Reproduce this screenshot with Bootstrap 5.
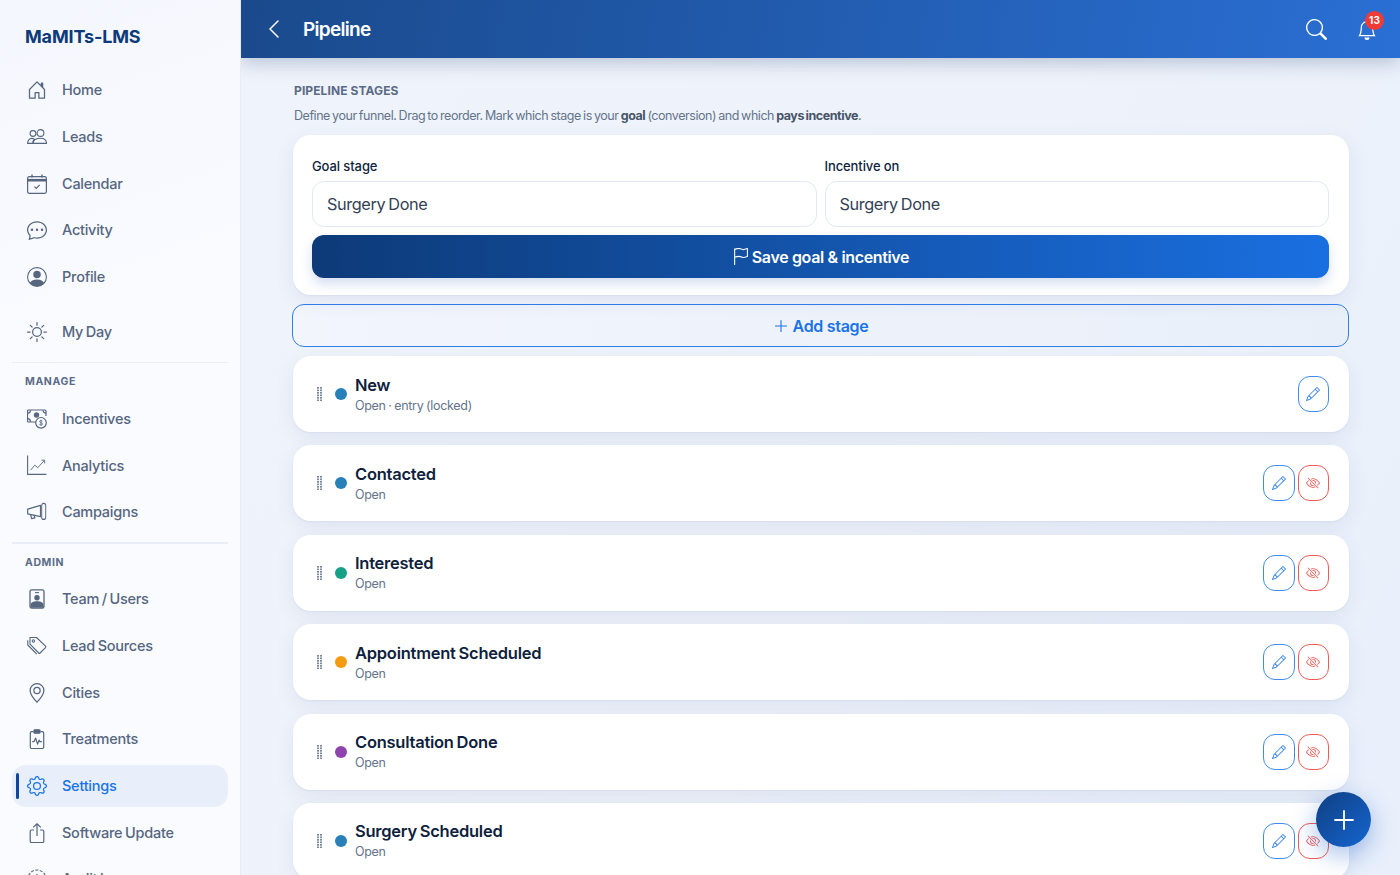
<!DOCTYPE html>
<html>
<head>
  <meta charset="utf-8">
  <meta name="viewport" content="width=device-width, initial-scale=1">
  <title>Pipeline</title>
  <link href="https://cdn.jsdelivr.net/npm/bootstrap@5.3.3/dist/css/bootstrap.min.css" rel="stylesheet">
  <script src="https://cdn.jsdelivr.net/npm/bootstrap@5.3.3/dist/js/bootstrap.bundle.min.js"></script>
  <style>
    html, body { height: 100%; overflow: hidden; }
    body { font-family: "Inter", "Liberation Sans", sans-serif; background: #eef2fa; color: #0f1f3d; }
    svg { display: block; flex-shrink: 0; }
    .app-shell { height: 875px; }
    .side-panel { width: 241px; flex-shrink: 0; height: 875px; overflow: hidden; padding: 0 12px; border-right: 1px solid #e6ebf5; background: linear-gradient(160deg, #f4f7fd 0%, #f9fbff 40%, #f9fbff 100%); }
    .brand-name { font-size: 18px; font-weight: 700; color: #0d3a78; padding: 25px 0 0 13px; height: 69px; line-height: 23px; letter-spacing: -.15px; }
    .side-link { height: 42.67px; margin-bottom: 4px; padding-left: 15px; gap: 15px; color: #56667f; font-size: 14.5px; font-weight: 500; text-decoration: none; border-radius: 14px; position: relative; letter-spacing: -.25px; word-spacing: -1px; }
    .side-link.is-active { background: #e8effb; color: #1a73e8; }
    .side-link.is-active::before { content: ""; position: absolute; left: 3.5px; top: 8px; bottom: 8px; width: 3px; border-radius: 2px; background: #0d47a1; }
    .side-gap { margin-top: 12px; }
    .side-rule { height: 1.5px; background: #e9edf6; margin-top: 9px; }
    .side-label { font-size: 10.5px; font-weight: 700; letter-spacing: .6px; color: #5b6b86; line-height: 14px; padding: 12px 0 8px 13px; }
    .top-strip { height: 58px; padding: 0 23px 0 27px; background: linear-gradient(100deg, #1a4a8c 0%, #2a6fd4 100%); box-shadow: 0 4px 18px rgba(30, 60, 110, .28); position: relative; z-index: 2; }
    .top-title { font-size: 19px; font-weight: 600; color: #fff; margin-left: 23px; padding-top: 2px; letter-spacing: -.7px; }
    .bell-wrap { position: relative; margin-left: 30px; margin-top: 1px; }
    .bell-count { position: absolute; top: -9px; left: 8px; width: 19px; height: 19px; border-radius: 50%; background: #ef3b36; color: #fff; font-size: 10px; font-weight: 700; line-height: 19px; text-align: center; }
    .main-col { background: linear-gradient(115deg, #eff3fb 0%, #eef2fa 55%, #e9f0fb 100%); overflow: hidden; min-width: 0; }
    .page-body { padding: 25px 51px 0 52px; }
    .page-heading { font-size: 12px; font-weight: 700; letter-spacing: .1px; color: #5b6b86; line-height: 15px; margin: 0 0 9px 1px; }
    .page-note { font-size: 12.5px; color: #64748b; line-height: 17px; margin: 0 0 11px 1px; letter-spacing: -.45px; word-spacing: -.9px; }
    .page-note b { color: #475569; font-weight: 700; }
    .soft-panel { border: 0; border-radius: 18px; background: #fff; box-shadow: 0 6px 20px rgba(40, 70, 130, .08), 0 1px 2px rgba(40, 70, 130, .06); }
    .goal-panel { padding: 23px 20px 17px 19px; margin-bottom: 9px; }
    .field-label { font-size: 13px; font-weight: 500; color: #0f1f3d; line-height: 17px; margin-bottom: 6px; letter-spacing: -.1px; }
    .field-box { height: 46px; border-radius: 12px; border: 1px solid #e2e8f2; font-size: 16.3px; color: #334155; padding: 0 14px; letter-spacing: -.4px; word-spacing: -1px; }
    .save-btn { height: 43px; width: 100%; margin-top: 8px; border: 0; border-radius: 12px; color: #fff; font-size: 16px; font-weight: 600; gap: 3px; letter-spacing: -.35px; background: linear-gradient(90deg, #0d3a78 0%, #1a6fe0 100%); box-shadow: 0 6px 12px rgba(20, 80, 170, .18); }
    .add-btn { height: 43px; width: calc(100% + 1px); margin: 0 0 9px -1px; border: 1px solid #2f7fe8; border-radius: 12px; color: #1a73e8; font-size: 16px; font-weight: 600; gap: 4px; background: linear-gradient(90deg, #f2f5fc, #e9eff9); letter-spacing: -.3px; }
    .add-btn:hover { color: #1a73e8; border-color: #2f7fe8; }
    .stage-row { height: 76px; margin-bottom: 13.4px; padding: 0 20px 0 24px; }
    .grip-mark { width: 5px; margin-right: 13px; }
    .stage-dot { width: 12px; height: 12px; border-radius: 50%; margin-right: 8px; }
    .stage-name { font-size: 16.5px; font-weight: 600; color: #0f1f3d; line-height: 20px; letter-spacing: -.25px; word-spacing: -1px; }
    .stage-sub { font-size: 12.5px; color: #64748b; line-height: 16px; margin-top: 3px; letter-spacing: -.3px; word-spacing: -.6px; }
    .tool-gap { gap: 3px; }
    .tool-btn { width: 31.5px; height: 36px; padding: 0; border-radius: 12px; background: #fff; border: 1px solid; }
    .tool-edit { border-color: #3f8bee; color: #2f7fe8; }
    .tool-hide { border-color: #ef5a55; color: #ef5a55; }
    .fab-add { position: fixed; left: 1316px; top: 792px; width: 55px; height: 55px; border-radius: 50%; border: 0; padding: 0; z-index: 5; background: linear-gradient(135deg, #0f3f82, #1565d0); box-shadow: 0 8px 26px rgba(25, 90, 200, .4); }
  </style>
</head>
<body>
  <div class="app-shell d-flex">
    <aside class="side-panel">
      <div class="brand-name">MaMITs-LMS</div>

      <a href="#" class="side-link d-flex align-items-center">
        <svg width="20" height="20" viewBox="0 0 16 16" fill="currentColor"><path d="M8.354 1.146a.5.5 0 0 0-.708 0l-6 6A.5.5 0 0 0 1.5 7.5v7a.5.5 0 0 0 .5.5h4.5a.5.5 0 0 0 .5-.5v-4h2v4a.5.5 0 0 0 .5.5H14a.5.5 0 0 0 .5-.5v-7a.5.5 0 0 0-.146-.354L13 5.793V2.5a.5.5 0 0 0-.5-.5h-1a.5.5 0 0 0-.5.5v1.293zM2.5 14V7.707l5.5-5.5 5.5 5.500V14H10v-4a.5.5 0 0 0-.5-.5h-3a.5.5 0 0 0-.5.5v4z"/></svg>
        Home
      </a>
      <a href="#" class="side-link d-flex align-items-center">
        <svg width="20" height="20" viewBox="0 0 20 20" fill="none" stroke="currentColor" stroke-width="1.1"><circle cx="6" cy="6.5" r="2.9"/><circle cx="13.5" cy="6" r="3.4"/><path d="M.6 16.4c0-3 1.600-5 4.300-5 1 0 1.800.3 2.400.7-1 1-1.600 2.500-1.600 4.300zM6.200 16.400c0-3.200 3-5.100 7.300-5.100s6 1.900 6 5.100z"/></svg>
        Leads
      </a>
      <a href="#" class="side-link d-flex align-items-center">
        <svg width="20" height="20" viewBox="0 0 20 20" fill="none" stroke="currentColor" stroke-width="1.2"><rect x=".6" y="2.600" width="18.800" height="16.800" rx="1.800"/><path d="M.6 6.200h18.800" stroke-width="2.600"/><path d="M5 .4v3M15 .4v3" stroke-width="1.400"/><path d="M7.400 12.600l1.900 1.900 3.400-3.600"/></svg>
        Calendar
      </a>
      <a href="#" class="side-link d-flex align-items-center">
        <svg width="20" height="20" viewBox="0 0 16 16" fill="currentColor"><path d="M5 8a1 1 0 1 1-2 0 1 1 0 0 1 2 0m4 0a1 1 0 1 1-2 0 1 1 0 0 1 2 0m3 1a1 1 0 1 0 0-2 1 1 0 0 0 0 2" transform="translate(0 -.2)"/><path d="m2.165 15.803.02-.004c1.830-.363 2.948-.842 3.468-1.105A9 9 0 0 0 8 15c4.418 0 8-3.134 8-7s-3.582-7-8-7-8 3.134-8 7c0 1.760.743 3.370 1.970 4.600a10.400 10.400 0 0 1-.524 2.318l-.003.011a11 11 0 0 1-.244.637c-.079.186.074.394.273.362a22 22 0 0 0 .693-.125m.8-3.108a1 1 0 0 0-.287-.801C1.618 10.830 1 9.468 1 8c0-3.192 3.004-6 7-6s7 2.808 7 6-3.004 6-7 6a8 8 0 0 1-2.088-.272 1 1 0 0 0-.711.074c-.387.196-1.240.570-2.634.893a11 11 0 0 0 .398-2"/></svg>
        Activity
      </a>
      <a href="#" class="side-link d-flex align-items-center">
        <svg width="20" height="20" viewBox="0 0 16 16" fill="currentColor"><path d="M11 6a3 3 0 1 1-6 0 3 3 0 0 1 6 0"/><path fill-rule="evenodd" d="M0 8a8 8 0 1 1 16 0A8 8 0 0 1 0 8m8-7a7 7 0 0 0-5.468 11.370C3.242 11.226 4.805 10 8 10s4.757 1.225 5.468 2.370A7 7 0 0 0 8 1"/></svg>
        Profile
      </a>
      <a href="#" class="side-link side-gap d-flex align-items-center">
        <svg width="20" height="20" viewBox="0 0 16 16" fill="none" stroke="currentColor" stroke-width="1" stroke-linecap="round"><circle cx="8" cy="8" r="3.500"/><path d="M8 .5v2M8 13.500v2M.5 8h2M13.500 8h2M2.700 2.700l1.400 1.400M11.900 11.900l1.400 1.400M2.700 13.300l1.400-1.400M11.900 4.100l1.400-1.400"/></svg>
        My Day
      </a>

      <div class="side-rule"></div>
      <div class="side-label">MANAGE</div>
      <a href="#" class="side-link d-flex align-items-center">
        <svg width="20" height="20" viewBox="0 0 20 20" fill="none" stroke="currentColor" stroke-width="1.200"><path d="M9.500 13H1.500a1 1 0 0 1-1-1V2a1 1 0 0 1 1-1h16.500a1 1 0 0 1 1 1v5"/><path d="M.6 4.200C2.400 4.200 3.400 3.200 3.600 1.200M16 1.200c.2 1.600 1.400 2.800 3 3M.6 9.600c1.800 0 2.800 1 3 3.200"/><circle cx="9.500" cy="6" r="2.100" fill="currentColor"/><circle cx="14" cy="13.800" r="5.300" fill="#f9fbff"/><path d="M15.500 12.200c-.4-.7-2.900-1-3 .4-.1 1.500 3.200.9 3.100 2.500-.1 1.300-2.800 1.100-3.300.2M14 10.700v6.200" stroke-width=".8"/></svg>
        Incentives
      </a>
      <a href="#" class="side-link d-flex align-items-center">
        <svg width="20" height="20" viewBox="0 0 20 20" fill="none" stroke="currentColor" stroke-width="1.100"><path d="M.6 .6v18.800h18.800"/><path d="M3.500 15.200l4.300-5 3 2.500 6.700-7.400M14.500 5.200h3.200v3.200" stroke-width=".9"/></svg>
        Analytics
      </a>
      <a href="#" class="side-link d-flex align-items-center">
        <svg width="20" height="20" viewBox="0 0 20 20" fill="none" stroke="currentColor" stroke-width="1.200" stroke-linejoin="round"><path d="M.7 7.200l12.800-3.800v11.200L.7 11.800z"/><rect x="14" y="1" width="5" height="16" rx="2.200" transform="translate(3.500 .4) scale(.8 1)"/><path d="M3.600 12.400l1 4.300 3.300-.8-.9-3"/></svg>
        Campaigns
      </a>

      <div class="side-rule"></div>
      <div class="side-label">ADMIN</div>
      <a href="#" class="side-link d-flex align-items-center">
        <svg width="20" height="20" viewBox="0 0 20 20" fill="none" stroke="currentColor" stroke-width="1.300"><rect x="3" y=".8" width="14" height="18.400" rx="1.800"/><path d="M8 3.600h4" stroke-width="1.100"/><circle cx="10" cy="8.800" r="2.700" fill="currentColor" stroke="none"/><path d="M3.500 18.800v-3c0-2 2.800-3.600 6.500-3.600s6.500 1.600 6.500 3.600v3z" fill="currentColor" stroke="none"/></svg>
        Team / Users
      </a>
      <a href="#" class="side-link d-flex align-items-center">
        <svg width="20" height="20" viewBox="0 0 20 20" fill="none" stroke="currentColor" stroke-width="1.100" stroke-linejoin="round"><path d="M3 1.500h6.500l9 8.700a1 1 0 0 1 0 1.400l-5.400 5.400a1 1 0 0 1-1.400 0L3 8.200z"/><path d="M.8 4.200v4.800l9 9.200"/><circle cx="6.400" cy="5" r="1.200"/></svg>
        Lead Sources
      </a>
      <a href="#" class="side-link d-flex align-items-center">
        <svg width="20" height="20" viewBox="0 0 16 16" fill="currentColor"><path d="M12.166 8.940c-.524 1.062-1.234 2.120-1.960 3.070A32 32 0 0 1 8 14.580a32 32 0 0 1-2.206-2.570c-.726-.95-1.436-2.008-1.960-3.070C3.304 7.867 3 6.862 3 6a5 5 0 0 1 10 0c0 .862-.305 1.867-.834 2.940M8 16s6-5.686 6-10A6 6 0 0 0 2 6c0 4.314 6 10 6 10"/><path d="M8 8a2 2 0 1 1 0-4 2 2 0 0 1 0 4m0 1a3 3 0 1 0 0-6 3 3 0 0 0 0 6"/></svg>
        Cities
      </a>
      <a href="#" class="side-link d-flex align-items-center">
        <svg width="20" height="20" viewBox="0 0 20 20" fill="none" stroke="currentColor" stroke-width="1.200" stroke-linejoin="round"><path d="M6.500 2.600H4.800a1.500 1.500 0 0 0-1.500 1.500v13.900a1.500 1.500 0 0 0 1.500 1.500h10.400a1.500 1.500 0 0 0 1.500-1.500V4.100a1.500 1.500 0 0 0-1.500-1.500h-1.700"/><rect x="7" y=".8" width="6" height="3.400" rx=".8" fill="currentColor"/><path d="M5.200 12.600h1.900l1.500-3.500 2 6 1.500-4 .8 1.500h2"/></svg>
        Treatments
      </a>
      <a href="#" class="side-link is-active d-flex align-items-center">
        <svg width="20" height="20" viewBox="0 0 16 16" fill="currentColor"><path d="M8 4.754a3.246 3.246 0 1 0 0 6.492 3.246 3.246 0 0 0 0-6.492M5.754 8a2.246 2.246 0 1 1 4.492 0 2.246 2.246 0 0 1-4.492 0"/><path d="M9.796 1.343c-.527-1.790-3.065-1.790-3.592 0l-.094.319a.873.873 0 0 1-1.255.52l-.292-.16c-1.640-.892-3.433.902-2.540 2.541l.159.292a.873.873 0 0 1-.52 1.255l-.319.094c-1.790.527-1.790 3.065 0 3.592l.319.094a.873.873 0 0 1 .52 1.255l-.16.292c-.892 1.640.901 3.434 2.541 2.540l.292-.159a.873.873 0 0 1 1.255.52l.094.319c.527 1.790 3.065 1.790 3.592 0l.094-.319a.873.873 0 0 1 1.255-.52l.292.16c1.640.893 3.434-.902 2.540-2.541l-.159-.292a.873.873 0 0 1 .52-1.255l.319-.094c1.790-.527 1.790-3.065 0-3.592l-.319-.094a.873.873 0 0 1-.52-1.255l.16-.292c.893-1.640-.902-3.433-2.541-2.540l-.292.159a.873.873 0 0 1-1.255-.52zm-2.633.283c.246-.835 1.428-.835 1.674 0l.094.319a1.873 1.873 0 0 0 2.693 1.115l.291-.16c.764-.415 1.600.42 1.184 1.185l-.159.292a1.873 1.873 0 0 0 1.116 2.692l.318.094c.835.246.835 1.428 0 1.674l-.319.094a1.873 1.873 0 0 0-1.115 2.693l.16.291c.415.764-.42 1.600-1.185 1.184l-.291-.159a1.873 1.873 0 0 0-2.693 1.116l-.094.318c-.246.835-1.428.835-1.674 0l-.094-.319a1.873 1.873 0 0 0-2.692-1.115l-.292.160c-.764.415-1.600-.42-1.184-1.185l.159-.291A1.873 1.873 0 0 0 1.945 8.930l-.319-.094c-.835-.246-.835-1.428 0-1.674l.319-.094A1.873 1.873 0 0 0 3.060 4.377l-.16-.292c-.415-.764.42-1.600 1.185-1.184l.292.159a1.873 1.873 0 0 0 2.692-1.115z"/></svg>
        Settings
      </a>
      <a href="#" class="side-link d-flex align-items-center">
        <svg width="20" height="20" viewBox="0 0 20 20" fill="none" stroke="currentColor" stroke-width="1.200" stroke-linejoin="round"><path d="M7 7H4.500a1.300 1.300 0 0 0-1.300 1.300v9.900a1.300 1.300 0 0 0 1.300 1.300h11a1.300 1.300 0 0 0 1.300-1.300V8.300A1.300 1.300 0 0 0 15.500 7H13"/><path d="M10 13V.8M6.200 4.400L10 .8l3.800 3.600"/></svg>
        Software Update
      </a>
      <a href="#" class="side-link d-flex align-items-center">
        <svg width="20" height="20" viewBox="0 0 20 20" fill="none" stroke="currentColor" stroke-width="1.200"><circle cx="10" cy="10" r="9" stroke-dasharray="3 1.500"/><path d="M10 5v5l3 2"/></svg>
        Audit log
      </a>
    </aside>

    <main class="main-col flex-grow-1">
      <header class="top-strip d-flex align-items-center">
        <svg width="12" height="20" viewBox="0 0 12 20" fill="none" stroke="#fff" stroke-width="1.500" stroke-linecap="round" stroke-linejoin="round"><path d="M10 2L2 10l8 8"/></svg>
        <div class="top-title">Pipeline</div>
        <svg class="ms-auto" width="21" height="21" viewBox="0 0 16 16" fill="#fff"><path d="M11.742 10.344a6.500 6.500 0 1 0-1.397 1.398h-.001q.044.060.098.115l3.850 3.850a1 1 0 0 0 1.415-1.414l-3.850-3.850a1 1 0 0 0-.115-.100zM12 6.500a5.500 5.500 0 1 1-11 0 5.500 5.500 0 0 1 11 0"/></svg>
        <div class="bell-wrap">
          <svg width="20" height="20" viewBox="0 0 16 16" fill="#fff"><path d="M8 16a2 2 0 0 0 2-2H6a2 2 0 0 0 2 2M8 1.918l-.797.161A4 4 0 0 0 4 6c0 .628-.134 2.197-.459 3.742-.160.767-.376 1.566-.663 2.258h10.244c-.287-.692-.502-1.490-.663-2.258C12.134 8.197 12 6.628 12 6a4 4 0 0 0-3.203-3.920zM14.220 12c.223.447.481.801.780 1H1c.299-.199.557-.553.780-1C2.680 10.200 3 6.880 3 6c0-2.420 1.720-4.440 4.005-4.901a1 1 0 1 1 1.990 0A5 5 0 0 1 13 6c0 .880.320 4.200 1.220 6"/></svg>
          <span class="bell-count">13</span>
        </div>
      </header>

      <div class="page-body">
        <div class="page-heading">PIPELINE STAGES</div>
        <p class="page-note">Define your funnel. Drag to reorder. Mark which stage is your <b>goal</b> (conversion) and which <b>pays incentive</b>.</p>

        <div class="card soft-panel goal-panel">
          <div class="row g-2">
            <div class="col-6">
              <div class="field-label">Goal stage</div>
              <select class="form-control field-box"><option>Surgery Done</option></select>
            </div>
            <div class="col-6">
              <div class="field-label">Incentive on</div>
              <select class="form-control field-box"><option>Surgery Done</option></select>
            </div>
          </div>
          <button class="btn save-btn d-flex align-items-center justify-content-center">
            <svg width="17" height="17" viewBox="0 0 16 16" fill="none" stroke="#fff" stroke-width="1" stroke-linejoin="round" stroke-linecap="round"><path d="M2.500 15.500V.8M2.500 1.300c1.300-.5 2.900-.9 4-.9 2 0 2.800 1.100 4 1.100 1.300 0 2.900-.6 4-1V8c-1.100.4-2.700 1-4 1-1.200 0-2-1.100-4-1.100-1.100 0-2.700.4-4 .9"/></svg>
            Save goal &amp; incentive
          </button>
        </div>

        <button class="btn add-btn d-flex align-items-center justify-content-center">
          <svg width="16" height="16" viewBox="0 0 16 16" fill="none" stroke="currentColor" stroke-width="1.100" stroke-linecap="round"><path d="M8 2.500v11M2.500 8h11"/></svg>
          Add stage
        </button>

        <div id="stages"></div>
      </div>
    </main>
  </div>

  <button class="fab-add d-flex align-items-center justify-content-center" aria-label="Add">
    <svg width="22" height="22" viewBox="0 0 22 22" fill="none" stroke="#fff" stroke-width="1.800" stroke-linecap="round"><path d="M11 2v18M2 11h18"/></svg>
  </button>

  <script>
    // stage rows, the entry stage has no hide button
    var stages = [
      { name: 'New', sub: 'Open · entry (locked)', color: '#2980b9', locked: true },
      { name: 'Contacted', sub: 'Open', color: '#2980b9' },
      { name: 'Interested', sub: 'Open', color: '#16a085' },
      { name: 'Appointment Scheduled', sub: 'Open', color: '#f39c12' },
      { name: 'Consultation Done', sub: 'Open', color: '#8e44ad' },
      { name: 'Surgery Scheduled', sub: 'Open', color: '#2980b9' }
    ];
    var grip = '<svg class="grip-mark" width="5" height="14" viewBox="0 0 5 14" fill="#7c8aa0">';
    for (var y = 0; y < 6; y++) {
      grip += '<rect x="0" y="' + (y * 2.5) + '" width="2" height="1.700"/><rect x="3" y="' + (y * 2.5) + '" width="2" height="1.700"/>';
    }
    grip += '</svg>';
    var pencil = '<svg width="14" height="14" viewBox="0 0 16 16" fill="currentColor"><path d="M12.146.146a.5.5 0 0 1 .708 0l3 3a.5.5 0 0 1 0 .708l-10 10a.5.5 0 0 1-.168.110l-5 2a.5.5 0 0 1-.650-.650l2-5a.5.5 0 0 1 .110-.168zM11.207 2.500 13.500 4.793 14.793 3.500 12.500 1.207zm1.586 3L10.500 3.207 4 9.707V10h.5a.5.5 0 0 1 .5.500v.5h.5a.5.5 0 0 1 .5.500v.5h.293zm-9.761 5.175-.106.106-1.528 3.821 3.821-1.528.106-.106A.5.5 0 0 1 5 12.500V12h-.5a.5.5 0 0 1-.5-.5V11h-.5a.5.5 0 0 1-.468-.325"/></svg>';
    var eyeOff = '<svg width="14" height="14" viewBox="0 0 16 16" fill="currentColor"><path d="M13.359 11.238C15.060 9.720 16 8 16 8s-3-5.500-8-5.500a7 7 0 0 0-2.790.588l.770.771A6 6 0 0 1 8 3.500c2.120 0 3.879 1.168 5.168 2.457A13 13 0 0 1 14.828 8q-.086.130-.195.288c-.335.480-.830 1.120-1.465 1.755q-.247.248-.517.486z"/><path d="M11.297 9.176a3.500 3.500 0 0 0-4.474-4.474l.823.823a2.500 2.500 0 0 1 2.829 2.829zm-2.943 1.299.822.822a3.500 3.500 0 0 1-4.474-4.474l.823.823a2.500 2.500 0 0 0 2.829 2.829"/><path d="M3.350 5.470q-.270.240-.518.487A13 13 0 0 0 1.172 8l.195.288c.335.480.830 1.120 1.465 1.755C4.121 11.332 5.881 12.500 8 12.500c.716 0 1.390-.133 2.020-.360l.770.772A7 7 0 0 1 8 13.500C3 13.500 0 8 0 8s.939-1.721 2.641-3.238l.708.709zm10.296 8.884-12-12 .708-.708 12 12z"/></svg>';
    var html = '';
    stages.forEach(function (s) {
      html += '<div class="card soft-panel stage-row d-flex flex-row align-items-center">' + grip +
        '<span class="stage-dot" style="background:' + s.color + '"></span>' +
        '<div class="flex-grow-1"><div class="stage-name">' + s.name + '</div><div class="stage-sub">' + s.sub + '</div></div>' +
        '<div class="d-flex tool-gap">' +
        '<button class="btn tool-btn tool-edit d-flex align-items-center justify-content-center">' + pencil + '</button>' +
        (s.locked ? '' : '<button class="btn tool-btn tool-hide d-flex align-items-center justify-content-center">' + eyeOff + '</button>') +
        '</div></div>';
    });
    document.getElementById('stages').innerHTML = html;
  </script>
</body>
</html>
